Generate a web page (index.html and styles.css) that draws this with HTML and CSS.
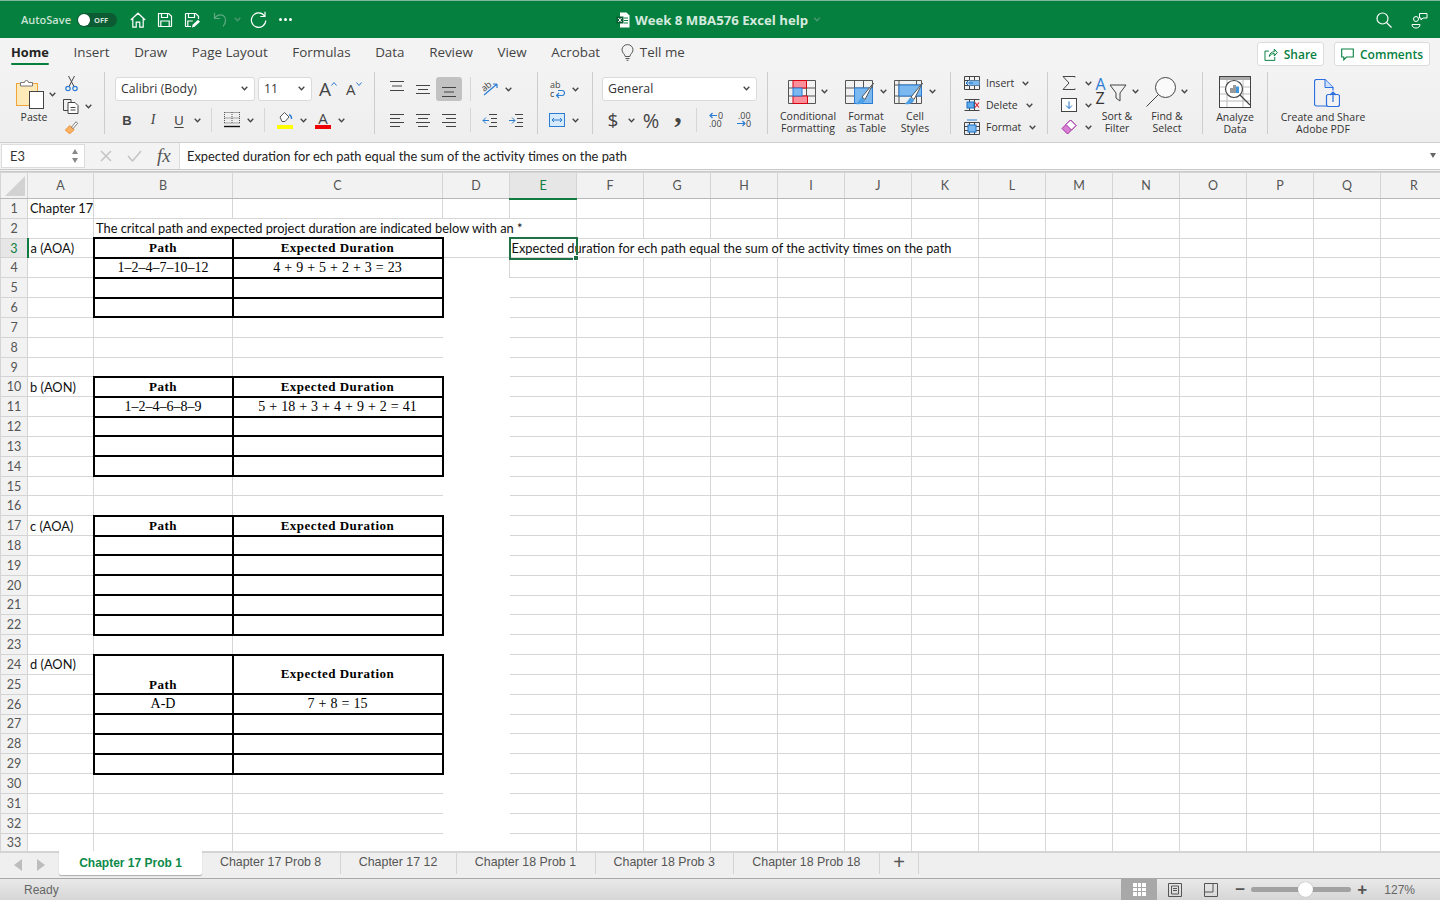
FILE: index.html
```html
<!DOCTYPE html>
<html lang="en">
<head>
<meta charset="UTF-8" />
<title>Week 8 MBA576 Excel help</title>
<link rel="stylesheet" href="styles.css">
</head>
<body>

<svg class="sprite" width="0" height="0">
  <symbol id="chev" viewBox="0 0 7 5"><path d="M.7.8 3.5 3.8 6.3.8" fill="none" stroke="#444" stroke-width="1.3"/></symbol>
  <symbol id="save" viewBox="0 0 16 16"><path d="M1.5 1.5h10.2l2.8 2.8v9.7a.5.5 0 0 1-.5.5H2a.5.5 0 0 1-.5-.5zM4.5 1.5v4h6v-4M3.8 14.5V9h8.4v5.5" fill="none" stroke="#fff" stroke-width="1.2"/></symbol>
</svg>

<header class="titlebar">
  <div class="qat">
    <span class="autosave">AutoSave</span>
    <span class="toggle"><i class="knob"></i><b>OFF</b></span>
    <svg class="q-home" width="16" height="16" viewBox="0 0 16 16"><path d="M.8 8 8 1.2 15.2 8M2.8 6.5v8.7h3.4v-5h3.6v5h3.4V6.5" fill="none" stroke="#fff" stroke-width="1.2"/></svg>
    <svg class="q-save" width="16" height="16"><use href="#save"/></svg>
    <svg class="q-save2" width="16" height="16" viewBox="0 0 16 16"><path d="M14.5 7V4.3l-2.8-2.8H2a.5.5 0 0 0-.5.5v12c0 .3.2.5.5.5h5M4.5 1.5v4h6v-4M3.8 14.5V9h5" fill="none" stroke="#fff" stroke-width="1.2"/><path d="m8 15.5.6-2.8 5.4-5 2 2-5.4 5z" fill="#fff"/></svg>
    <svg class="q-undo" width="14" height="16" viewBox="0 0 14 16"><path d="M1.5 1v5.5H7M1.8 6.2C3.500 3 7.500 1.800 10.500 3.800c3 2.200 2.800 6.500-.5 10.700" fill="none" stroke="#5fa983" stroke-width="1.2"/></svg>
    <svg class="q-chev" width="7" height="5"><use href="#chev" class="dim"/></svg>
    <svg class="q-redo" width="17" height="17" viewBox="0 0 17 17"><path d="M14.500 5A7.200 7.200 0 1 0 15.800 9.500M15 .8v4.700h-4.700" fill="none" stroke="#fff" stroke-width="1.2"/></svg>
    <span class="q-dots"><i></i><i></i><i></i></span>
  </div>
  <div class="doc-title">
    <svg width="14" height="16" viewBox="0 0 14 16"><path d="M4 .5h6.500L13.500 3.500v12H4z" fill="#fff"/><path d="M8 6h4M8 8.500h4M8 11h4" stroke="#05803f"/><rect x=".5" y="4.500" width="7" height="7" fill="#0a5c33"/><path d="m2.300 6 3.200 4M5.500 6l-3.200 4" stroke="#fff"/></svg>
    <span>Week 8 MBA576 Excel help</span>
    <svg width="8" height="5"><use href="#chev" class="dim"/></svg>
  </div>
  <div class="title-right">
    <svg width="16" height="16" viewBox="0 0 16 16"><circle cx="6.500" cy="6.500" r="5.500" fill="none" stroke="#fff" stroke-width="1.200"/><path d="m10.500 10.500 5 5" stroke="#fff" stroke-width="1.200"/></svg>
    <svg width="17" height="17" viewBox="0 0 17 17"><circle cx="5" cy="7" r="2.500" fill="none" stroke="#fff"/><path d="M1 12.500h8c0 2.500-1.800 3.500-4 3.500s-4-1-4-3.500zM8.500 1.500h7.500v4.500h-4l-2 2V6H8.500z" fill="none" stroke="#fff"/></svg>
  </div>
</header>

<nav class="tabs">
  <a class="active">Home</a>
  <a>Insert</a>
  <a>Draw</a>
  <a>Page Layout</a>
  <a>Formulas</a>
  <a>Data</a>
  <a>Review</a>
  <a>View</a>
  <a>Acrobat</a>
  <a class="tell">
    <svg width="13" height="17" viewBox="0 0 13 17"><path d="M4.200 12.500C4 10 1 9 1 5.800a5.500 5.200 0 0 1 11 0C12 9 9 10 8.800 12.500zM4.500 14.500h4M5.500 16.300h2" fill="none" stroke="#555"/></svg>
    Tell me
  </a>
  <div class="tab-actions">
    <button class="share">
      <svg width="14" height="13" viewBox="0 0 14 13"><path d="M5 3H1v9.500h10V9M5.500 8.500c0-3 2.500-4.800 5-4.800V1l3 3.500-3 3.500V5.500c-2 0-4 1-5 3z" fill="none" stroke="#05803f"/></svg>
      Share
    </button>
    <button class="comments">
      <svg width="13" height="13" viewBox="0 0 13 13"><path d="M.7 1h11.600v8H5.500L2.800 11.800V9H.7z" fill="none" stroke="#05803f" stroke-width="1.100"/></svg>
      Comments
    </button>
  </div>
</nav>

<div class="ribbon">

  <section class="group clip">
    <div class="big paste">
      <div class="big-icon">
        <svg width="28" height="30" viewBox="0 0 28 30"><rect x=".5" y="4.500" width="21" height="22" fill="#fdeab8" stroke="#f1a43c"/><path d="M4.500 7V3.500h4a2 2 0 0 1 4 0h4V7z" fill="#fff" stroke="#777"/><rect x="13.500" y="12.500" width="14" height="17" fill="#fff" stroke="#444"/></svg>
        <svg class="chev" width="7" height="5"><use href="#chev"/></svg>
      </div>
      <div class="big-label">Paste</div>
    </div>
    <div class="clip-tools">
      <svg class="ic" width="13" height="17" viewBox="0 0 13 17"><path d="m3.500 1 5.500 10.500M9.500 1 4 11.500" fill="none" stroke="#444"/><circle cx="3" cy="13.500" r="2.200" fill="none" stroke="#2b7cd3" stroke-width="1.200"/><circle cx="10" cy="13.500" r="2.200" fill="none" stroke="#2b7cd3" stroke-width="1.200"/></svg>
      <div class="clip-copy">
        <svg width="17" height="15" viewBox="0 0 17 15"><path d="M5 11.500H.5V.5H8v3" fill="none" stroke="#444"/><path d="M5 3.500h7l3 3v8H5zM7.500 8.500h5M7.500 11h5" fill="#fff" stroke="#444"/></svg>
        <svg class="chev" width="7" height="5"><use href="#chev"/></svg>
      </div>
      <svg width="17" height="17" viewBox="0 0 17 17"><path d="M6.500 6 12 11.500 6.500 16.500C4 15.500 2 14 .5 11.500z" fill="#f9b264" stroke="#e8841c"/><path d="M8.500 8 14.500 1l2 2-6 7z" fill="#fff" stroke="#555"/></svg>
    </div>
  </section>

  <section class="group font">
    <div class="row">
      <div class="select sel-font">Calibri (Body)<svg class="chev" width="7" height="5"><use href="#chev"/></svg></div>
      <div class="select sel-size">11<svg class="chev" width="7" height="5"><use href="#chev"/></svg></div>
      <span class="grow-a">A<svg width="6" height="4" viewBox="0 0 6 4"><path d="m.5 3.500 2.500-3 2.500 3" fill="none" stroke="#2b7cd3"/></svg></span>
      <span class="grow-a shrink">A<svg width="6" height="4" viewBox="0 0 6 4"><path d="m.5.500 2.500 3 2.500-3" fill="none" stroke="#2b7cd3"/></svg></span>
    </div>
    <div class="row font-row">
      <span class="ic fmt bold">B</span>
      <span class="ic fmt ital">I</span>
      <span class="ic fmt under">U</span>
      <svg class="chev" width="7" height="5"><use href="#chev"/></svg>
      <i class="sep"></i>
      <svg class="ic" width="16" height="24" viewBox="0 0 16 24"><path d="M.5 4.500h15M.5 10h15M.5 15h15M.5 4v11M8 4v11M15.500 4v11" fill="none" stroke="#555" stroke-dasharray="1 1"/><path d="M0 18.500h16" stroke="#111" stroke-width="1.400"/></svg>
      <svg class="chev" width="7" height="5"><use href="#chev"/></svg>
      <i class="sep"></i>
      <svg class="ic" width="16" height="24" viewBox="0 0 16 24"><path d="m3 9 4.500-4.500 4.500 4.500-4 4.500H5z" fill="#fff" stroke="#555"/><path d="M12 7c1.500 0 2.500 1.500 2.500 4" fill="none" stroke="#2b7cd3" stroke-width="1.500"/><rect y="17" width="16" height="4" fill="#ffff00"/></svg>
      <svg class="chev" width="7" height="5"><use href="#chev"/></svg>
      <span class="ic color-a">A<i></i></span>
      <svg class="chev" width="7" height="5"><use href="#chev"/></svg>
    </div>
  </section>

  <section class="group align">
    <div class="row">
      <svg class="al" width="26" height="24" viewBox="0 0 26 24"><path d="M6 4.500h14M8 9h10M6 13.500h14" stroke="#444"/></svg>
      <svg class="al" width="26" height="24" viewBox="0 0 26 24"><path d="M6 8.500h14M8 12.500h10M6 16.500h14" stroke="#444"/></svg>
      <svg class="al picked" width="26" height="24" viewBox="0 0 26 24"><path d="M6 10.500h14M8 15h10M6 19.500h14" stroke="#444"/></svg>
      <i class="sep sep-al"></i>
      <svg class="ic" width="16" height="24" viewBox="0 0 16 24"><path d="m2 18 13-11M15 7h-4M15 7v4" fill="none" stroke="#2b7cd3" stroke-width="1.200"/><text x="0" y="13" class="ab" transform="rotate(-40 4 11)">ab</text></svg>
      <svg class="chev" width="7" height="5"><use href="#chev"/></svg>
    </div>
    <div class="row">
      <svg class="al" width="26" height="24" viewBox="0 0 26 24"><path d="M6 6.500h14M6 10.500h10M6 14.500h14M6 18.500h10" stroke="#444"/></svg>
      <svg class="al" width="26" height="24" viewBox="0 0 26 24"><path d="M6 6.500h14M8 10.500h10M6 14.500h14M8 18.500h10" stroke="#444"/></svg>
      <svg class="al" width="26" height="24" viewBox="0 0 26 24"><path d="M6 6.500h14M10 10.500h10M6 14.500h14M10 18.500h10" stroke="#444"/></svg>
      <i class="sep sep-al2"></i>
      <svg class="al" width="26" height="24" viewBox="0 0 26 24"><path d="M12 6.500h8M14 10.500h6M14 14.500h6M12 18.500h8" stroke="#444"/><path d="M12 12.500H6M9 9.500l-3 3 3 3" fill="none" stroke="#2b7cd3"/></svg>
      <svg class="al" width="26" height="24" viewBox="0 0 26 24"><path d="M12 6.500h8M14 10.500h6M14 14.500h6M12 18.500h8" stroke="#444"/><path d="M6 12.500h6M9 9.500l3 3-3 3" fill="none" stroke="#2b7cd3"/></svg>
    </div>
  </section>

  <section class="group wrap">
    <div class="row">
      <svg class="ic" width="16" height="24" viewBox="0 0 16 24"><text x="1" y="11" class="ab">ab</text><text x="1" y="20" class="ab">c</text><path d="M9 13.500h4a1.800 1.800 0 0 1 0 5H8M10 16l-2.500 2.500 2.500 2.500" fill="none" stroke="#2b7cd3" stroke-width="1.100"/></svg>
      <svg class="chev" width="7" height="5"><use href="#chev"/></svg>
    </div>
    <div class="row">
      <svg class="ic" width="16" height="24" viewBox="0 0 16 24"><rect x=".5" y="5.500" width="15" height="13" fill="#d6eafb" stroke="#2b7cd3"/><path d="M3 12h10M5 10l-2 2 2 2M11 10l2 2-2 2" fill="none" stroke="#2b7cd3"/></svg>
      <svg class="chev" width="7" height="5"><use href="#chev"/></svg>
    </div>
  </section>

  <section class="group num">
    <div class="row">
      <div class="select sel-num">General<svg class="chev" width="7" height="5"><use href="#chev"/></svg></div>
    </div>
    <div class="row num-row">
      <span class="ic dollar">$</span>
      <svg class="chev" width="7" height="5"><use href="#chev"/></svg>
      <span class="ic pct">%</span>
      <span class="ic comma">,</span>
      <i class="sep"></i>
      <svg class="ic" width="16" height="24" viewBox="0 0 16 24"><text x="9" y="11" class="dec">0</text><text x="0" y="19" class="dec">.00</text><path d="M8 7.500H1M3.500 5 1 7.500 3.500 10" fill="none" stroke="#2b7cd3" stroke-width="1.200"/></svg>
      <svg class="ic dec-up" width="16" height="24" viewBox="0 0 16 24"><text x="2" y="11" class="dec">.00</text><text x="10" y="19" class="dec">0</text><path d="M1 15.500h8M6.500 13 9 15.500 6.500 18" fill="none" stroke="#2b7cd3" stroke-width="1.200"/></svg>
    </div>
  </section>

  <section class="group styles">
    <div class="big b-cf">
      <div class="big-icon">
        <svg width="28" height="24" viewBox="0 0 28 24"><path d="M.5.500h27v23H.5zM.5 8h27M.5 16h27M9.500.500v23M18.500.500v23" fill="none" stroke="#555"/><path d="M5 .500h13.500V8H5zM5 16h14.500v7.500H5z" fill="#fb8f9a" stroke="#d8000f"/><rect x="5" y="8" width="9" height="8" fill="#7ab8ef" stroke="#2b7cd3"/></svg>
        <svg class="chev" width="7" height="5"><use href="#chev"/></svg>
      </div>
      <div class="big-label">Conditional<br>Formatting</div>
    </div>
    <div class="big b-ft">
      <div class="big-icon">
        <svg width="30" height="28" viewBox="0 0 30 28"><path d="M.5.500h27v23H.5zM.5 8h27M.5 16h27M9.500.500v23M18.500.500v23" fill="none" stroke="#555"/><rect x="9.500" y="8" width="18" height="15.500" fill="#7ab8ef" stroke="#2b7cd3"/><path d="M28.500 3 17 17l3 2.500z" fill="#fff" stroke="#555"/><path d="M16.500 17.500c-2 1-2 4-6 6.500 5 1 9-1 9.500-4z" fill="#4c9fe6"/></svg>
        <svg class="chev" width="7" height="5"><use href="#chev"/></svg>
      </div>
      <div class="big-label">Format<br>as Table</div>
    </div>
    <div class="big b-cs">
      <div class="big-icon">
        <svg width="30" height="28" viewBox="0 0 30 28"><path d="M.5.500h27v23H.5zM.5 5h27M.5 16h27M5 .500v23M22.500.500v23" fill="none" stroke="#555"/><rect x="5" y="5" width="22.500" height="11" fill="#7ab8ef" stroke="#2b7cd3"/><path d="M28.500 3 17 17l3 2.500z" fill="#fff" stroke="#555"/><path d="M16.500 17.500c-2 1-2 4-6 6.500 5 1 9-1 9.500-4z" fill="#4c9fe6"/></svg>
        <svg class="chev" width="7" height="5"><use href="#chev"/></svg>
      </div>
      <div class="big-label">Cell<br>Styles</div>
    </div>
  </section>

  <section class="group cells">
    <div class="line-row">
      <svg width="16" height="14" viewBox="0 0 16 14"><path d="M.5.500h15v13H.5zM.5 4.500h15M.5 9.500h15M5.500.500v13M10.500.500v13" fill="none" stroke="#444"/><rect x="5" y="4.500" width="10.500" height="5" fill="#7ab8ef"/><path d="M9 7H2M4.500 4.500 2 7l2.500 2.500" fill="none" stroke="#1a70c8"/></svg>
      <span>Insert</span><svg class="chev" width="7" height="5"><use href="#chev"/></svg>
    </div>
    <div class="line-row">
      <svg width="16" height="14" viewBox="0 0 16 14"><path d="M.5 1.500h15M.5 12.500h15M5.500 1v12M10.500 1v12" fill="none" stroke="#444"/><rect x="3" y="4" width="7" height="6" fill="#5fa8ea" stroke="#1a70c8"/><path d="m11 4.500 4 5M15 4.500l-4 5" stroke="#e0202e" stroke-width="1.200"/></svg>
      <span>Delete</span><svg class="chev" width="7" height="5"><use href="#chev"/></svg>
    </div>
    <div class="line-row">
      <svg width="16" height="16" viewBox="0 0 16 16"><path d="M.5 3.500h15v12H.5zM.5 7.500h15M.5 11.500h15M5.500 3.500v12M10.500 3.500v12" fill="none" stroke="#444"/><rect x="4" y="6" width="8" height="7" fill="#7ab8ef" stroke="#1a70c8"/><path d="M3 1h10" stroke="#2b7cd3"/></svg>
      <span>Format</span><svg class="chev" width="7" height="5"><use href="#chev"/></svg>
    </div>
  </section>

  <section class="group edit">
    <div class="edit-col">
      <div class="line-row">
        <svg width="16" height="16" viewBox="0 0 16 16"><path d="M14 2.500V1.500H2l6 6.500-6 6.500h12v-1" fill="none" stroke="#444"/></svg>
        <svg class="chev" width="7" height="5"><use href="#chev"/></svg>
      </div>
      <div class="line-row">
        <svg width="16" height="14" viewBox="0 0 16 14"><rect x=".5" y=".5" width="15" height="13" fill="#fff" stroke="#444"/><path d="M8 3.500v7M5 7.500l3 3 3-3" fill="none" stroke="#1a70c8"/></svg>
        <svg class="chev" width="7" height="5"><use href="#chev"/></svg>
      </div>
      <div class="line-row">
        <svg width="16" height="16" viewBox="0 0 16 16"><path d="M1 9.500 9.500 1 15 6.500 6.500 15z" fill="#d77fd3" stroke="#a32ea3"/><path d="M5 5.500 10.500 11l4.500-4.500L9.500 1z" fill="#fff" stroke="#a32ea3"/></svg>
        <svg class="chev" width="7" height="5"><use href="#chev"/></svg>
      </div>
    </div>
    <div class="big b-sort">
      <div class="big-icon">
        <span class="az"><b>A</b><b>Z</b></span>
        <svg class="funnel" width="18" height="18" viewBox="0 0 18 18"><path d="M1 1h16l-6 8v8l-4-3V9z" fill="none" stroke="#444"/></svg>
        <svg class="chev" width="7" height="5"><use href="#chev"/></svg>
      </div>
      <div class="big-label">Sort &amp;<br>Filter</div>
    </div>
    <div class="big b-find">
      <div class="big-icon">
        <svg width="30" height="30" viewBox="0 0 30 30"><circle cx="19.500" cy="10.500" r="10" fill="#fafafa" stroke="#444"/><path d="M12.500 17.500.5 29.500" stroke="#444"/></svg>
        <svg class="chev" width="7" height="5"><use href="#chev"/></svg>
      </div>
      <div class="big-label">Find &amp;<br>Select</div>
    </div>
  </section>

  <section class="group analyze">
    <div class="big">
      <div class="big-icon">
        <svg width="32" height="32" viewBox="0 0 32 32"><rect x=".5" y=".5" width="31" height="31" fill="#fff" stroke="#444"/><rect x="1" y="1" width="30" height="3" fill="#aaa"/><path d="M1 11h30M1 18h30M1 25h30M8 4v27M24 4v27" stroke="#bbb"/><circle cx="15" cy="13" r="8.500" fill="#fff" stroke="#444" stroke-width="1.200"/><path d="M11 12h3v5h-3zM14 9h3v8h-3z" fill="#999"/><path d="M17 10.500h3V17h-3z" fill="#3d96e0"/><path d="m21 19 10 10" stroke="#444" stroke-width="1.200"/></svg>
      </div>
      <div class="big-label">Analyze<br>Data</div>
    </div>
  </section>

  <section class="group adobe">
    <div class="big">
      <div class="big-icon">
        <svg width="26" height="28" viewBox="0 0 26 28"><path d="M13 27H2.500a2 2 0 0 1-2-2V2.500a2 2 0 0 1 2-2H11l8 8v3" fill="none" stroke="#2b6fe0" stroke-width="1.200"/><path d="M11 .5v8h8" fill="#cfe0fb" stroke="#2b6fe0"/><rect x="12.500" y="15.500" width="13" height="12" rx="2" fill="#f3f3f3" stroke="#2b6fe0" stroke-width="1.200"/><path d="M19 23v-9.500M16 16l3-3 3 3" fill="none" stroke="#2b6fe0" stroke-width="1.200"/></svg>
      </div>
      <div class="big-label">Create and Share<br>Adobe PDF</div>
    </div>
  </section>
</div>

<div class="formula">
  <div class="namebox">E3<span class="spin"><i class="up"></i><i class="down"></i></span></div>
  <svg class="f-x" width="12" height="12" viewBox="0 0 12 12"><path d="m1 1 10 10M11 1 1 11" stroke="#c4c4c4" stroke-width="1.500"/></svg>
  <svg class="f-ok" width="15" height="12" viewBox="0 0 15 12"><path d="m1 6 4.500 5L14 1" fill="none" stroke="#c4c4c4" stroke-width="1.500"/></svg>
  <span class="f-fx">fx</span>
  <div class="f-input">Expected duration for ech path equal the sum of the activity times on the path<i class="f-drop"></i></div>
</div>

<main class="sheet">
  <table class="grid">
    <colgroup><col class="c-h"><col class="c-a"><col class="c-b"><col class="c-c"><col class="c-d"><col span="14" class="c-n"></colgroup>
    <thead>
      <tr><th class="corner"><i></i></th><th>A</th><th>B</th><th>C</th><th>D</th><th class="on">E</th><th>F</th><th>G</th><th>H</th><th>I</th><th>J</th><th>K</th><th>L</th><th>M</th><th>N</th><th>O</th><th>P</th><th>Q</th><th>R</th></tr>
    </thead>
    <tbody>
      <tr><th>1</th><td>Chapter 17<td><td><td><td><td><td><td><td><td><td><td><td><td><td><td><td><td></tr>
      <tr><th>2</th><td><td class="over" colspan="4">The critcal path and expected project duration are indicated below with an *</td><td><td><td><td><td><td><td><td><td><td><td><td><td></tr>
      <tr><th class="on">3</th><td>a (AOA)</td><td class="bx hd">Path</td><td class="bx hd">Expected Duration</td><td class="d d3"><td colspan="7">Expected duration for ech path equal the sum of the activity times on the path</td><td><td><td><td><td><td><td></tr>
      <tr><th>4</th><td><td class="bx">1–2–4–7–10–12</td><td class="bx">4 + 9 + 5 + 2 + 3 = 23</td><td class="d d4"><td><td><td><td><td><td><td><td><td><td><td><td><td><td></tr>
      <tr><th>5</th><td><td class="bx"><td class="bx"><td class="d"><td><td><td><td><td><td><td><td><td><td><td><td><td><td></tr>
      <tr><th>6</th><td><td class="bx"><td class="bx"><td class="d"><td><td><td><td><td><td><td><td><td><td><td><td><td><td></tr>
      <tr><th>7</th><td><td><td><td class="d dl"><td><td><td><td><td><td><td><td><td><td><td><td><td><td></tr>
      <tr><th>8</th><td><td><td><td class="d dl"><td><td><td><td><td><td><td><td><td><td><td><td><td><td></tr>
      <tr><th>9</th><td><td><td><td class="d dl"><td><td><td><td><td><td><td><td><td><td><td><td><td><td></tr>
      <tr><th>10</th><td>b (AON)</td><td class="bx hd">Path</td><td class="bx hd">Expected Duration</td><td class="d"><td><td><td><td><td><td><td><td><td><td><td><td><td><td></tr>
      <tr><th>11</th><td><td class="bx">1–2–4–6–8–9</td><td class="bx">5 + 18 + 3 + 4 + 9 + 2 = 41</td><td class="d"><td><td><td><td><td><td><td><td><td><td><td><td><td><td></tr>
      <tr><th>12</th><td><td class="bx"><td class="bx"><td class="d"><td><td><td><td><td><td><td><td><td><td><td><td><td><td></tr>
      <tr><th>13</th><td><td class="bx"><td class="bx"><td class="d"><td><td><td><td><td><td><td><td><td><td><td><td><td><td></tr>
      <tr><th>14</th><td><td class="bx"><td class="bx"><td class="d"><td><td><td><td><td><td><td><td><td><td><td><td><td><td></tr>
      <tr><th>15</th><td><td><td><td class="d dl"><td><td><td><td><td><td><td><td><td><td><td><td><td><td></tr>
      <tr><th>16</th><td><td><td><td class="d dl"><td><td><td><td><td><td><td><td><td><td><td><td><td><td></tr>
      <tr><th>17</th><td>c (AOA)</td><td class="bx hd">Path</td><td class="bx hd">Expected Duration</td><td class="d"><td><td><td><td><td><td><td><td><td><td><td><td><td><td></tr>
      <tr><th>18</th><td><td class="bx"><td class="bx"><td class="d"><td><td><td><td><td><td><td><td><td><td><td><td><td><td></tr>
      <tr><th>19</th><td><td class="bx"><td class="bx"><td class="d"><td><td><td><td><td><td><td><td><td><td><td><td><td><td></tr>
      <tr><th>20</th><td><td class="bx"><td class="bx"><td class="d"><td><td><td><td><td><td><td><td><td><td><td><td><td><td></tr>
      <tr><th>21</th><td><td class="bx"><td class="bx"><td class="d"><td><td><td><td><td><td><td><td><td><td><td><td><td><td></tr>
      <tr><th>22</th><td><td class="bx"><td class="bx"><td class="d"><td><td><td><td><td><td><td><td><td><td><td><td><td><td></tr>
      <tr><th>23</th><td><td><td><td class="d dl"><td><td><td><td><td><td><td><td><td><td><td><td><td><td></tr>
      <tr><th>24</th><td>d (AON)</td><td class="bx hd low" rowspan="2">Path</td><td class="bx hd" rowspan="2">Expected Duration</td><td class="d"><td><td><td><td><td><td><td><td><td><td><td><td><td><td></tr>
      <tr><th>25</th><td><td class="d"><td><td><td><td><td><td><td><td><td><td><td><td><td><td></tr>
      <tr><th>26</th><td><td class="bx">A-D</td><td class="bx">7 + 8 = 15</td><td class="d"><td><td><td><td><td><td><td><td><td><td><td><td><td><td></tr>
      <tr><th>27</th><td><td class="bx"><td class="bx"><td class="d"><td><td><td><td><td><td><td><td><td><td><td><td><td><td></tr>
      <tr><th>28</th><td><td class="bx"><td class="bx"><td class="d"><td><td><td><td><td><td><td><td><td><td><td><td><td><td></tr>
      <tr><th>29</th><td><td class="bx"><td class="bx"><td class="d"><td><td><td><td><td><td><td><td><td><td><td><td><td><td></tr>
      <tr><th>30</th><td><td><td><td class="d dl"><td><td><td><td><td><td><td><td><td><td><td><td><td><td></tr>
      <tr><th>31</th><td><td><td><td class="d dl"><td><td><td><td><td><td><td><td><td><td><td><td><td><td></tr>
      <tr><th>32</th><td><td><td><td class="d dl"><td><td><td><td><td><td><td><td><td><td><td><td><td><td></tr>
      <tr><th>33</th><td><td><td><td class="d dl"><td><td><td><td><td><td><td><td><td><td><td><td><td><td></tr>
    </tbody>
  </table>
  <div class="selection"><i></i></div>
</main>

<div class="sheets">
  <span class="nav"><i class="left"></i><i class="right"></i></span>
  <a class="sheet-tab active">Chapter 17 Prob 1</a>
  <a class="sheet-tab">Chapter 17 Prob 8</a>
  <a class="sheet-tab">Chapter 17 12</a>
  <a class="sheet-tab">Chapter 18 Prob 1</a>
  <a class="sheet-tab">Chapter 18 Prob 3</a>
  <a class="sheet-tab">Chapter 18 Prob 18</a>
  <a class="sheet-tab add">+</a>
</div>

<footer class="status">
  <span class="ready">Ready</span>
  <div class="views">
    <span class="view on"><svg width="13" height="13" viewBox="0 0 13 13"><path d="M0 0h13v13H0z" fill="#fff"/><path d="M4.500 0v13M8.500 0v13M0 4.500h13M0 8.500h13" stroke="#a8a8a8"/></svg></span>
    <span class="view"><svg width="14" height="14" viewBox="0 0 14 14"><path d="M.5.500h13v13H.5z" fill="none" stroke="#555"/><path d="M3.500 3h7v8h-7zM5 5.500h4M5 7.500h4" fill="none" stroke="#555"/></svg></span>
    <span class="view"><svg width="14" height="14" viewBox="0 0 14 14"><path d="M.5.500h13v13H.5zM.5 9h8.500V.5" fill="none" stroke="#555"/></svg></span>
  </div>
  <div class="zoom">
    <span class="z-btn">−</span>
    <div class="track"><i></i></div>
    <span class="z-btn">+</span>
    <span class="z-pct">127%</span>
  </div>
</footer>

</body>
</html>
```

FILE: styles.css
```css
* {
  box-sizing: border-box;
}
html, body {
  height: 100%;
}
body {
  margin: 0;
  width: 1440px;
  height: 900px;
  overflow: hidden;
  display: flex;
  flex-direction: column;
  font-family: "Open Sans", "Noto Sans", sans-serif;
  color: #333;
  background: #fff;
}
i {
  font-style: normal;
}
.sprite {
  position: absolute;
}
.dim {
  opacity: 0.4;
  filter: invert(1);
}

/* title bar */
.titlebar {
  position: relative;
  flex: none;
  height: 38px;
  display: flex;
  align-items: center;
  justify-content: center;
  background: #05803f;
  border-top: 1px solid #7fb79a;
}
.qat {
  position: absolute;
  left: 21px;
  top: 0;
  height: 37px;
  display: flex;
  align-items: center;
}
.autosave {
  font-size: 11px;
  font-weight: 600;
  color: #c9e3d5;
  width: 56px;
  white-space: nowrap;
}
.toggle {
  display: flex;
  align-items: center;
  width: 40px;
  height: 14px;
  border-radius: 7px;
  background: #0c5b33;
}
.knob {
  width: 12px;
  height: 12px;
  margin-left: 1px;
  border-radius: 50%;
  background: #fff;
}
.toggle b {
  margin-left: 4px;
  font-size: 7.5px;
  color: #cfe5da;
}
.q-home { margin-left: 13px; }
.q-save { margin-left: 11px; }
.q-save2 { margin-left: 11px; }
.q-undo { margin-left: 13px; }
.q-chev { margin-left: 7px; }
.q-redo { margin-left: 9px; }
.q-dots {
  display: flex;
  gap: 2px;
  margin-left: 12px;
}
.q-dots i {
  width: 3px;
  height: 3px;
  border-radius: 50%;
  background: #fff;
}
.doc-title {
  display: flex;
  align-items: center;
  gap: 5px;
  font-size: 13.2px;
  font-weight: 700;
  color: #d5eadf;
  margin-left: -3px;
}
.title-right {
  position: absolute;
  right: 12px;
  top: 11px;
  display: flex;
  gap: 19px;
}

/* tabs */
.tabs {
  flex: none;
  height: 32px;
  display: flex;
  align-items: center;
  gap: 24.6px;
  padding-left: 11px;
  padding-bottom: 4px;
  background: #f3f3f3;
  font-size: 13.4px;
  color: #444;
}
.tabs a.active {
  position: relative;
  font-size: 12.8px;
  font-weight: 700;
  color: #222;
}
.tabs a.active::after {
  content: "";
  position: absolute;
  left: 0;
  right: 0;
  bottom: -4px;
  height: 2px;
  border-radius: 1px;
  background: #05803f;
}
.tell {
  display: flex;
  align-items: center;
  gap: 6px;
  margin-left: -4px;
}
.tab-actions {
  display: flex;
  align-self: flex-start;
  gap: 10px;
  margin-left: auto;
  margin-right: 10px;
  margin-top: 4px;
}
.tab-actions button {
  display: flex;
  align-items: center;
  justify-content: center;
  gap: 6px;
  height: 24px;
  background: #fff;
  border: 1px solid #dcdcdc;
  border-radius: 3px;
  font-family: inherit;
  font-size: 12px;
  font-weight: 600;
  color: #05803f;
}
.share { width: 67px; }
.comments { width: 96px; }

/* ribbon */
.ribbon {
  flex: none;
  height: 73px;
  display: flex;
  align-items: flex-start;
  padding-top: 2px;
  background: linear-gradient(#f3f3f3, #eeeeee);
  border-bottom: 1px solid #cfcfcf;
}
.group {
  flex: none;
  height: 62px;
  padding-top: 5px;
  border-right: 1px solid #cdcdcd;
}
.clip { width: 105px; display: flex; }
.font { width: 270px; padding-left: 10px; }
.align { width: 163px; padding-left: 9px; }
.wrap { width: 55px; padding-left: 11px; }
.num { width: 175px; padding-left: 9px; }
.styles { width: 183px; padding-left: 7px; display: flex; }
.cells { width: 97px; padding: 0 0 0 13px; }
.edit { width: 155px; padding: 0 0 0 13px; display: flex; }
.analyze { width: 65px; }
.adobe { width: 172px; border-right: none; padding-left: 0; }
.adobe .big { width: 110px; }
.adobe svg { margin: -2px 0 0 8px; }
.analyze svg { margin-top: -4px; }

.row {
  display: flex;
  align-items: center;
  height: 24px;
}
.row + .row {
  margin-top: 7px;
}
.ic {
  flex: none;
  display: flex;
  align-items: center;
  justify-content: center;
  width: 16px;
  height: 24px;
}
.al {
  flex: none;
  display: block;
}
.picked {
  background: #c2c2c2;
  border-radius: 3px;
}
.chev {
  flex: none;
  width: 7px;
  height: 5px;
}
.row > .chev {
  margin-left: 7px;
}
.row > .chev + .ic {
  margin-left: 8px;
}
.sep {
  flex: none;
  width: 1px;
  height: 24px;
  margin: 0 12px 0 10px;
  background: #d6d6d6;
}
.sep-al { margin: 0 11px 0 8px; }
.sep-al2 { margin: 0 6px 0 8px; }

.big {
  flex: none;
  display: flex;
  flex-direction: column;
  align-items: center;
}
.big-icon {
  display: flex;
  align-items: center;
  gap: 5px;
  height: 34px;
}
.big-label {
  font-size: 10.5px;
  line-height: 12px;
  text-align: center;
  white-space: nowrap;
  color: #333;
}
.styles .big-icon {
  align-items: flex-start;
  padding-top: 3px;
}
.styles .chev {
  margin-top: 9px;
}

/* clipboard */
.paste {
  width: 60px;
  padding-left: 8px;
}
.paste .big-icon {
  margin-left: 4px;
}
.clip-tools {
  display: flex;
  flex-direction: column;
  align-items: flex-start;
  gap: 7px;
  margin: -2px 0 0 3px;
}
.clip-tools .ic {
  height: 17px;
  margin-left: 2px;
  width: 13px;
}
.clip-copy {
  display: flex;
  align-items: center;
  gap: 5px;
}

/* selects */
.select {
  flex: none;
  display: flex;
  align-items: center;
  justify-content: space-between;
  height: 24px;
  padding: 0 6px 2px 5px;
  background: #fff;
  border: 1px solid #dadada;
  border-radius: 3px;
  font-size: 12.3px;
  color: #333;
}
.sel-font { width: 140px; }
.sel-size { width: 54px; margin-left: 3px; }
.sel-num { width: 155px; }

.grow-a {
  display: flex;
  align-items: flex-start;
  margin-left: 7px;
  font-size: 19px;
  line-height: 20px;
  color: #444;
}
.grow-a svg { margin-top: 3px; }
.shrink {
  margin-left: 9px;
  font-size: 15px;
}

/* font row */
.font-row { padding-left: 4px; }
.fmt {
  font-family: "Liberation Sans", sans-serif;
  font-size: 13px;
  color: #444;
}
.fmt + .fmt { margin-left: 10px; }
.bold { font-weight: 700; }
.ital { font-style: italic; font-family: "Liberation Serif", serif; font-size: 14px; }
.under { text-decoration: underline; text-underline-offset: 2px; }
.color-a {
  position: relative;
  display: block;
  text-align: center;
  font-size: 15px;
  line-height: 20px;
  color: #444;
}
.color-a i {
  position: absolute;
  left: 0;
  top: 17px;
  width: 16px;
  height: 4px;
  background: #f00000;
}

/* number */
.ab {
  font-size: 9px;
  fill: #444;
}
.dec {
  font-size: 9px;
  fill: #444;
}
.num-row { padding-left: 3px; }
.dollar {
  font-size: 19px;
  color: #444;
}
.pct {
  font-size: 20px;
  color: #444;
}
.comma {
  margin-left: 11px;
  font-family: "Liberation Serif", serif;
  font-size: 30px;
  font-weight: 700;
  line-height: 8px;
  color: #444;
  align-items: flex-start;
}
.dec-up { margin-left: 11px; }

/* styles, cells, editing */
.b-cf { width: 66px; }
.b-ft { width: 50px; }
.b-cs { width: 48px; }

.line-row {
  display: flex;
  align-items: center;
  height: 22px;
  gap: 6px;
  font-size: 10.5px;
  color: #333;
}
.line-row .chev {
  margin-left: 2px;
}
.edit-col {
  width: 33px;
  flex: none;
}
.b-sort { width: 46px; padding-top: 5px; }
.b-find { width: 54px; padding-top: 5px; }
.edit .big-icon { align-items: flex-start; }
.b-sort .big-icon { gap: 0; }
.b-sort .chev { margin: 12px 0 0 5px; }
.b-find .chev { margin-top: 12px; }
.funnel { margin-top: 7px; }
.az {
  display: flex;
  flex-direction: column;
  font-size: 16px;
  line-height: 14px;
  width: 13px;
}
.az b { font-weight: 400; }
.az b:first-child { color: #2b7cd3; }
.analyze .big { width: 64px; }

/* formula bar */
.formula {
  flex: none;
  height: 29px;
  display: flex;
  align-items: center;
  background: #f3f3f3;
  border-bottom: 3px double #c9c9c9;
  font-family: Lato, "Open Sans", sans-serif;
  font-size: 12.85px;
}
.namebox {
  position: relative;
  width: 84px;
  height: 24px;
  margin-left: 1px;
  padding: 0 8px;
  background: #fff;
  border: 1px solid #dcdcdc;
  line-height: 22px;
}
.spin i {
  position: absolute;
  right: 6px;
  border-left: 3.5px solid transparent;
  border-right: 3.5px solid transparent;
}
.spin .up { top: 4px; border-bottom: 5px solid #888; }
.spin .down { top: 13px; border-top: 5px solid #888; }
.f-x { margin-left: 15px; }
.f-ok { margin-left: 15px; }
.f-fx {
  margin-left: 15px;
  width: 22px;
  font-family: "Liberation Serif", serif;
  font-style: italic;
  font-size: 19px;
  color: #555;
}
.f-input {
  position: relative;
  flex: 1;
  height: 100%;
  padding-left: 7px;
  background: #fff;
  border-left: 1px solid #dcdcdc;
  line-height: 27px;
  color: #222;
}
.f-drop {
  position: absolute;
  right: 4px;
  top: 10px;
  border-left: 3.5px solid transparent;
  border-right: 3.5px solid transparent;
  border-top: 5px solid #666;
}

/* sheet */
.sheet {
  position: relative;
  flex: none;
  height: 679px;
  overflow: hidden;
}
.grid {
  table-layout: fixed;
  width: 1447px;
  border-collapse: collapse;
  font-family: Lato, "Open Sans", sans-serif;
  font-size: 12.85px;
  color: #111;
}
.c-h { width: 27px; }
.c-a { width: 66px; }
.c-b { width: 139px; }
.c-c { width: 210px; }
.c-d { width: 67px; }
.c-n { width: 67px; }
.grid th {
  padding: 0;
  background: #f2f2f2;
  border: 1px solid #d4d4d4;
  font-weight: 400;
  font-size: 12.5px;
  color: #555;
}
.grid thead th {
  height: 26px;
  border-bottom-color: #b8b8b8;
}
.grid td {
  height: 19.83px;
  padding: 0 2px;
  border: 1px solid #d6d6d6;
  white-space: nowrap;
  overflow: hidden;
}
.grid tbody th {
  height: 19.83px;
}
.grid th.on {
  color: #107c41;
  background: #e6e6e6;
}
.grid thead th.on {
  border-bottom: 2px solid #107c41;
}
.grid tbody th.on {
  border-right: 2px solid #107c41;
}
.grid td.over {
  border-bottom: none;
}
.grid td.d {
  border-top: none;
  border-bottom: none;
  border-right-style: hidden;
}
.grid td.dl {
  border-left-style: hidden;
}
.grid td.d3 {
  border-bottom: 1px solid #d6d6d6;
}
.grid td.d4 {
  border-top: 1px solid #d6d6d6;
  border-right: 1px solid #d6d6d6;
}
.grid td.bx {
  border: 2px solid #000;
  text-align: center;
  font-family: "Liberation Serif", serif;
  font-size: 14px;
  word-spacing: 0.5px;
  color: #000;
}
.grid td.hd {
  font-size: 13px;
  font-weight: 700;
  letter-spacing: 0.5px;
  word-spacing: 0;
}
.grid td.low {
  vertical-align: bottom;
}
.corner {
  position: relative;
}
.corner i {
  position: absolute;
  right: 2px;
  bottom: 2px;
  border-left: 20px solid transparent;
  border-bottom: 20px solid #d2d2d2;
}
.selection {
  position: absolute;
  left: 509px;
  top: 65px;
  width: 69px;
  height: 23px;
  border: 2px solid #1e7145;
}
.selection i {
  position: absolute;
  right: -3px;
  bottom: -3px;
  width: 6px;
  height: 6px;
  background: #1e7145;
  border: 1px solid #fff;
}

/* sheet tabs */
.sheets {
  flex: none;
  height: 27px;
  display: flex;
  align-items: stretch;
  background: #efefef;
  border-top: 2px solid #d4d4d4;
  font-family: "Liberation Sans", sans-serif;
  font-size: 12.4px;
  color: #555;
}
.nav {
  width: 59px;
  position: relative;
}
.nav i {
  position: absolute;
  top: 6px;
  border-top: 6px solid transparent;
  border-bottom: 6px solid transparent;
}
.nav .left { left: 14px; border-right: 8px solid #bdbdbd; }
.nav .right { left: 37px; border-left: 8px solid #bdbdbd; }
.sheet-tab {
  display: flex;
  align-items: center;
  padding: 0 18.500px 3px 18px;
  margin-bottom: 4px;
  border-right: 1px solid #d4d4d4;
}
.sheet-tab.active {
  width: 143px;
  justify-content: center;
  margin-top: -2px;
  margin-bottom: 3px;
  padding: 0;
  background: #fff;
  border: none;
  border-radius: 0 0 2px 2px;
  box-shadow: 0 1px 1px #aaa;
  font-size: 12px;
  font-weight: 700;
  color: #0d8a4a;
}
.sheet-tab.add {
  width: 39px;
  padding: 0 0 3px;
  justify-content: center;
  font-size: 20px;
  color: #555;
}

/* status bar */
.status {
  flex: 1;
  display: flex;
  align-items: center;
  background: linear-gradient(#e9e9e9, #d6d6d6);
  border-top: 1px solid #a8a8a8;
  font-family: "Liberation Sans", sans-serif;
  font-size: 12px;
  color: #666;
}
.ready {
  margin-left: 24px;
}
.views {
  display: flex;
  align-self: stretch;
  margin-left: auto;
}
.view {
  width: 36px;
  display: flex;
  align-items: center;
  justify-content: center;
}
.view.on {
  background: #a8a8a8;
}
.zoom {
  display: flex;
  align-items: center;
  margin-left: 4px;
  margin-right: 25px;
}
.z-btn {
  width: 14px;
  text-align: center;
  font-size: 17px;
  font-weight: 700;
  line-height: 17px;
  color: #555;
}
.track {
  position: relative;
  width: 100px;
  height: 5px;
  margin: 0 4px;
  background: #a2a2a2;
  border-radius: 3px;
}
.track i {
  position: absolute;
  left: 47px;
  top: -5px;
  width: 15px;
  height: 15px;
  border-radius: 50%;
  background: #fff;
  box-shadow: 0 0 1px #888;
}
.z-pct {
  margin-left: 15px;
}
```
